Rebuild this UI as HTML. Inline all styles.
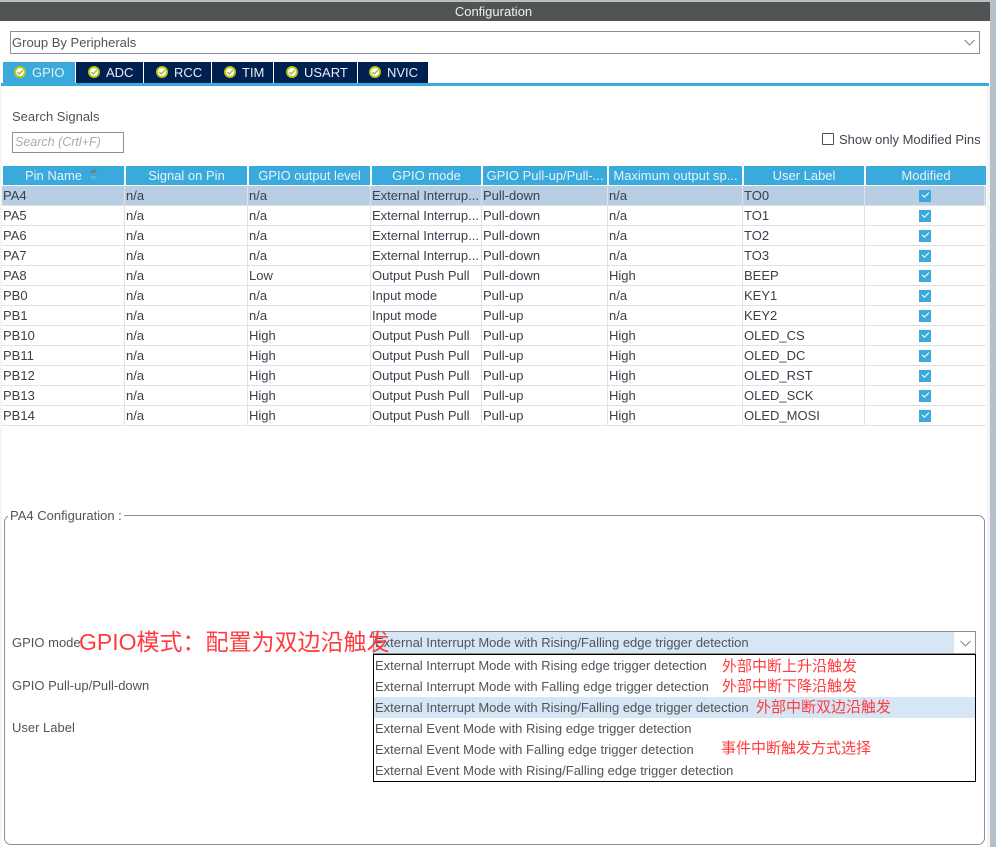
<!DOCTYPE html>
<html lang="zh">
<head>
<meta charset="utf-8">
<title>Configuration</title>
<style>
html,body{margin:0;padding:0;background:#fff}
body{width:996px;height:847px;position:relative;overflow:hidden;font-family:"Liberation Sans","Noto Sans CJK SC",sans-serif;font-size:13px;letter-spacing:0;color:#50535c}
.a{position:absolute;white-space:nowrap}
.t{position:absolute;white-space:nowrap;line-height:16px}
.tab{position:absolute;top:62px;height:21px;background:#002050;color:#e8eef4;line-height:21px;box-sizing:border-box}
.tab svg{position:absolute;top:4px}
.tab span{position:absolute;top:0}
table{position:absolute;left:2px;top:166px;border-collapse:separate;border-spacing:0;table-layout:fixed;width:984px}
th{height:19px;padding:0;background:#3aa9dc;color:#e6f4fb;font-weight:normal;text-align:center;border-right:2px solid #fff;border-bottom:1px solid #fff;overflow:hidden;white-space:nowrap;box-sizing:content-box;line-height:19px}
th:first-child{border-left:1px solid #fff}
td{height:19px;padding:0;border-bottom:1px solid #e2e2e2;color:#3a3f4a;overflow:hidden;white-space:nowrap;line-height:19px;background:linear-gradient(#e2e2e2,#e2e2e2) no-repeat calc(100% - 1px) 0/1px 100%}
tr.s td{background:linear-gradient(#e2e2e2,#e2e2e2) no-repeat calc(100% - 1px) 0/1px 100%,#b8cee4}
td:first-child{padding-left:1px}
td:last-child{text-align:center;padding:0 2px 0 0;background-image:none}
td i{display:inline-block;width:12px;height:12px;background:#3aa9dc;position:relative;vertical-align:-2px}
td i:after{content:"";position:absolute;left:3px;top:2px;width:6px;height:3px;border-left:1.6px solid #fff;border-bottom:1.6px solid #fff;transform:rotate(-45deg)}
.r{position:absolute;white-space:nowrap;color:#ff3b3f;letter-spacing:0;font-size:15px;line-height:20px}
.o{position:absolute;left:1px;white-space:nowrap;line-height:21px;height:21px}
</style>
</head>
<body>
<div class="a" style="left:0;top:0;width:996px;height:2px;background:#b5c0c8"></div>
<div class="a" style="left:990px;top:0;width:6px;height:847px;background:#b5c0c8"></div>
<div class="a" style="left:987px;top:86px;width:3px;height:761px;background:#f3f4f5"></div>
<div class="a" style="left:0;top:86px;width:2px;height:761px;background:#f5f5f5"></div>
<div class="a" style="left:0;top:2px;width:987px;height:19px;background:#525453;color:#f0f0f0;text-align:center;line-height:20px;padding-right:3px">Configuration</div>

<div class="a" style="left:10px;top:31px;height:21px;border:1px solid #8c9095;line-height:22px;padding-left:1px;box-sizing:content-box;width:967px">Group By Peripherals</div>
<svg class="a" style="left:964px;top:39px" width="11" height="7" viewBox="0 0 11 7"><path d="M.5 1L5.500 6L10.500 1" fill="none" stroke="#7d8288" stroke-width="1"/></svg>

<div class="tab" style="left:3px;width:72px;background:#3aa9dc"><svg style="left:11px" width="12" height="12" viewBox="0 0 12 12"><circle cx="6" cy="6" r="5" fill="#fff" stroke="#b5c81a" stroke-width="2"/><path d="M3.300 6L5.300 8L8.800 4.200" fill="none" stroke="#a8b820" stroke-width="1.400"/></svg><span style="left:29px">GPIO</span></div>
<div class="tab" style="left:76px;width:67px"><svg style="left:12px" width="12" height="12" viewBox="0 0 12 12"><circle cx="6" cy="6" r="5" fill="#fff" stroke="#b5c81a" stroke-width="2"/><path d="M3.300 6L5.300 8L8.800 4.200" fill="none" stroke="#a8b820" stroke-width="1.400"/></svg><span style="left:30px">ADC</span></div>
<div class="tab" style="left:144px;width:67px"><svg style="left:12px" width="12" height="12" viewBox="0 0 12 12"><circle cx="6" cy="6" r="5" fill="#fff" stroke="#b5c81a" stroke-width="2"/><path d="M3.300 6L5.300 8L8.800 4.200" fill="none" stroke="#a8b820" stroke-width="1.400"/></svg><span style="left:30px">RCC</span></div>
<div class="tab" style="left:212px;width:61px"><svg style="left:12px" width="12" height="12" viewBox="0 0 12 12"><circle cx="6" cy="6" r="5" fill="#fff" stroke="#b5c81a" stroke-width="2"/><path d="M3.300 6L5.300 8L8.800 4.200" fill="none" stroke="#a8b820" stroke-width="1.400"/></svg><span style="left:30px">TIM</span></div>
<div class="tab" style="left:274px;width:83px"><svg style="left:12px" width="12" height="12" viewBox="0 0 12 12"><circle cx="6" cy="6" r="5" fill="#fff" stroke="#b5c81a" stroke-width="2"/><path d="M3.300 6L5.300 8L8.800 4.200" fill="none" stroke="#a8b820" stroke-width="1.400"/></svg><span style="left:30px">USART</span></div>
<div class="tab" style="left:358px;width:70px"><svg style="left:11px" width="12" height="12" viewBox="0 0 12 12"><circle cx="6" cy="6" r="5" fill="#fff" stroke="#b5c81a" stroke-width="2"/><path d="M3.300 6L5.300 8L8.800 4.200" fill="none" stroke="#a8b820" stroke-width="1.400"/></svg><span style="left:29px">NVIC</span></div>
<div class="a" style="left:1px;top:83px;width:988px;height:3px;background:#3aa9dc"></div>

<div class="t" style="left:12px;top:109px">Search Signals</div>
<div class="a" style="left:12px;top:132px;height:19px;border:1px solid #8c9095;line-height:19px;padding-left:2px;box-sizing:content-box;width:108px;font-style:italic;color:#a9acb0;font-size:12.500px">Search (Crtl+F)</div>
<div class="a" style="left:822px;top:133px;width:10px;height:10px;border:1px solid #4b4f55;border-radius:1px"></div>
<div class="t" style="left:839px;top:132px;color:#3f444f">Show only Modified Pins</div>

<table>
<colgroup><col style="width:124px"><col style="width:123px"><col style="width:123px"><col style="width:111px"><col style="width:126px"><col style="width:135px"><col style="width:122px"><col style="width:120px"></colgroup>
<tr><th>Pin Name<span style="display:inline-block;width:20px"></span></th><th>Signal on Pin</th><th>GPIO output level</th><th>GPIO mode</th><th>GPIO Pull-up/Pull-...</th><th>Maximum output sp...</th><th>User Label</th><th style="border-right:0">Modified</th></tr>
<tr class="s"><td>PA4</td><td>n/a</td><td>n/a</td><td>External Interrup...</td><td>Pull-down</td><td>n/a</td><td>TO0</td><td><i></i></td></tr>
<tr><td>PA5</td><td>n/a</td><td>n/a</td><td>External Interrup...</td><td>Pull-down</td><td>n/a</td><td>TO1</td><td><i></i></td></tr>
<tr><td>PA6</td><td>n/a</td><td>n/a</td><td>External Interrup...</td><td>Pull-down</td><td>n/a</td><td>TO2</td><td><i></i></td></tr>
<tr><td>PA7</td><td>n/a</td><td>n/a</td><td>External Interrup...</td><td>Pull-down</td><td>n/a</td><td>TO3</td><td><i></i></td></tr>
<tr><td>PA8</td><td>n/a</td><td>Low</td><td>Output Push Pull</td><td>Pull-down</td><td>High</td><td>BEEP</td><td><i></i></td></tr>
<tr><td>PB0</td><td>n/a</td><td>n/a</td><td>Input mode</td><td>Pull-up</td><td>n/a</td><td>KEY1</td><td><i></i></td></tr>
<tr><td>PB1</td><td>n/a</td><td>n/a</td><td>Input mode</td><td>Pull-up</td><td>n/a</td><td>KEY2</td><td><i></i></td></tr>
<tr><td>PB10</td><td>n/a</td><td>High</td><td>Output Push Pull</td><td>Pull-up</td><td>High</td><td>OLED_CS</td><td><i></i></td></tr>
<tr><td>PB11</td><td>n/a</td><td>High</td><td>Output Push Pull</td><td>Pull-up</td><td>High</td><td>OLED_DC</td><td><i></i></td></tr>
<tr><td>PB12</td><td>n/a</td><td>High</td><td>Output Push Pull</td><td>Pull-up</td><td>High</td><td>OLED_RST</td><td><i></i></td></tr>
<tr><td>PB13</td><td>n/a</td><td>High</td><td>Output Push Pull</td><td>Pull-up</td><td>High</td><td>OLED_SCK</td><td><i></i></td></tr>
<tr><td>PB14</td><td>n/a</td><td>High</td><td>Output Push Pull</td><td>Pull-up</td><td>High</td><td>OLED_MOSI</td><td><i></i></td></tr>
</table>
<svg class="a" style="left:88px;top:168px" width="11" height="13" viewBox="0 0 11 13"><path d="M1.500 5L5.500 1L9.500 5Z" fill="#6e7f88"/><path d="M1.500 8L5.500 12L9.500 8Z" fill="#62b3dc"/></svg>

<div class="a" style="left:4px;top:515px;width:979px;height:328px;border:1px solid #8c9095;border-radius:7px"></div>
<div class="t" style="left:8px;top:508px;background:#fff;padding:0 2px;height:16px">PA4 Configuration :</div>

<div class="t" style="left:12px;top:635px">GPIO mode</div>
<div class="t" style="left:12px;top:678px">GPIO Pull-up/Pull-down</div>
<div class="t" style="left:12px;top:720px">User Label</div>

<div class="a" style="left:373px;top:631px;width:601px;height:21px;border:1px solid #8c9095;background:#d6e6f4;line-height:22px"><span style="position:absolute;left:1px;top:0">External Interrupt Mode with Rising/Falling edge trigger detection</span><span style="position:absolute;right:0;top:0;width:21px;height:21px;background:#fff"></span></div>
<svg class="a" style="left:960px;top:640px" width="11" height="7" viewBox="0 0 11 7"><path d="M.5 1L5.500 6L10.500 1" fill="none" stroke="#7d8288" stroke-width="1"/></svg>

<div class="a" style="left:373px;top:654px;width:601px;height:126px;border:1px solid #000;background:#fff">
<div class="a" style="left:0;top:42px;width:601px;height:21px;background:#d6e6f4"></div>
<div class="o" style="top:0">External Interrupt Mode with Rising edge trigger detection</div>
<div class="o" style="top:21px">External Interrupt Mode with Falling edge trigger detection</div>
<div class="o" style="top:42px">External Interrupt Mode with Rising/Falling edge trigger detection</div>
<div class="o" style="top:63px">External Event Mode with Rising edge trigger detection</div>
<div class="o" style="top:84px">External Event Mode with Falling edge trigger detection</div>
<div class="o" style="top:105px">External Event Mode with Rising/Falling edge trigger detection</div>
</div>

<div class="r" style="left:79px;top:627px;font-size:23px;line-height:30px">GPIO模式：配置为双边沿触发</div>
<div class="r" style="left:722px;top:657px">外部中断上升沿触发</div>
<div class="r" style="left:722px;top:677px">外部中断下降沿触发</div>
<div class="r" style="left:756px;top:698px">外部中断双边沿触发</div>
<div class="r" style="left:721px;top:739px">事件中断触发方式选择</div>
</body>
</html>
